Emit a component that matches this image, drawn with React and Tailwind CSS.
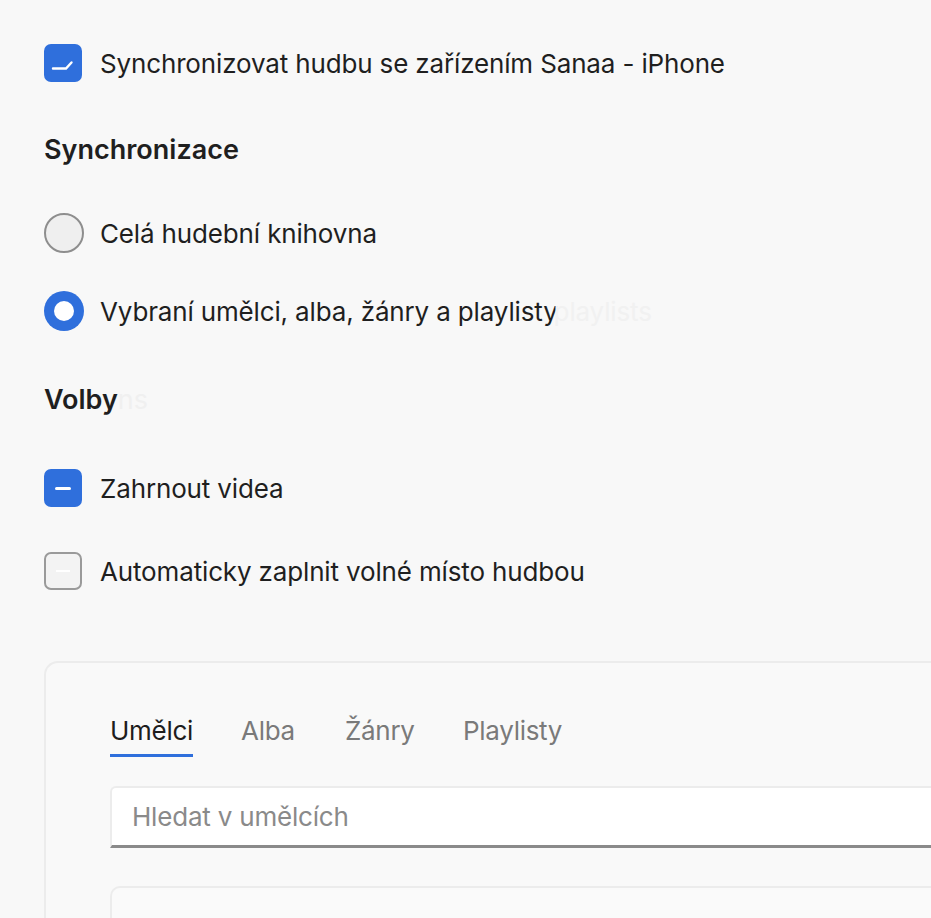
import React, { useState } from "react";

const font = { fontFamily: "Inter, 'Noto Sans', 'Liberation Sans', sans-serif" };

function CheckBox({ checked, mark }) {
  if (!checked) {
    return (
      <div className="w-[38px] h-[38px] shrink-0 rounded-[7px] border-2 border-[#9a9a9a] bg-[#f3f3f3] flex items-center justify-center">
        <div className="w-[14px] h-[2px] bg-white" />
      </div>
    );
  }
  return (
    <div className="w-[38px] h-[38px] shrink-0 rounded-[7px] bg-[#2f6fdc] flex items-center justify-center">
      {mark === "check" ? (
        <svg width="38" height="38" viewBox="0 0 38 38">
          <path d="M9 24.5h13l5.5-6" fill="none" stroke="white" strokeWidth="2.4" strokeLinecap="round" />
        </svg>
      ) : (
        <div className="w-[16px] h-[3px] rounded bg-white" />
      )}
    </div>
  );
}

function Radio({ selected }) {
  if (selected) {
    return (
      <div className="w-[40px] h-[40px] shrink-0 rounded-full bg-[#2f6fdc] flex items-center justify-center">
        <div className="w-[20px] h-[20px] rounded-full bg-white" />
      </div>
    );
  }
  return <div className="w-[40px] h-[40px] shrink-0 rounded-full border-2 border-[#8e8e8e] bg-[#efefef]" />;
}

export default function App() {
  const [tab, setTab] = useState("Umělci");
  const tabs = [
    { label: "Umělci", w: "w-[131px]" },
    { label: "Alba", w: "w-[104px]" },
    { label: "Žánry", w: "w-[118px]" },
    { label: "Playlisty", w: "w-[120px]" },
  ];

  return (
    <div className="min-h-[918px] w-[931px] overflow-hidden bg-[#f8f8f8] text-[#1f1f1f]" style={font}>
      <div className="pl-[44px] pt-[44px]">
        <div className="flex items-center gap-[18px] h-[38px]">
          <CheckBox checked mark="check" />
          <span className="text-[26px] tracking-[-0.15px]">Synchronizovat hudbu se zařízením Sanaa - iPhone</span>
        </div>

        <h2 className="mt-[52px] text-[27px] font-semibold leading-[32px]">Synchronizace</h2>

        <div className="mt-[47px] flex items-center gap-[16px] h-[40px]">
          <Radio />
          <span className="text-[26px] tracking-[-0.15px]">Celá hudební knihovna</span>
        </div>

        <div className="mt-[38px] flex items-center gap-[16px] h-[40px]">
          <Radio selected />
          <span className="text-[26px] tracking-[-0.15px]">
            Vybraní umělci, alba, žánry a playlisty
            <span className="text-[#f1f1f1] ml-[-4px]">playlists</span>
          </span>
        </div>

        <h2 className="mt-[53px] text-[27px] font-semibold leading-[32px]">
          Volby<span className="text-[#f0f0f0] font-normal">ns</span>
        </h2>

        <div className="mt-[53px] flex items-center gap-[18px] h-[38px]">
          <CheckBox checked />
          <span className="text-[26px] tracking-[-0.15px]">Zahrnout videa</span>
        </div>

        <div className="mt-[45px] flex items-center gap-[18px] h-[38px]">
          <CheckBox />
          <span className="text-[26px] tracking-[-0.15px]">Automaticky zaplnit volné místo hudbou</span>
        </div>

        <div className="mt-[71px] w-[1000px] h-[400px] rounded-tl-[14px] border-t-2 border-l-2 border-[#ececec] bg-[#f9f9f9] pl-[64px] pt-[52px]">
          <div className="flex items-end">
            {tabs.map((t) => (
              <div key={t.label} className={t.w}>
                <button
                  onClick={() => setTab(t.label)}
                  className="relative pb-[10px] text-[26px] leading-[32px] tracking-[-0.3px]"
                >
                  <span className={tab === t.label ? "text-[#1d1d1d]" : "text-[#7a7a7a]"}>{t.label}</span>
                  {tab === t.label && (
                    <span className="absolute left-0 right-0 bottom-0 h-[3px] bg-[#2f6fdc]" />
                  )}
                </button>
              </div>
            ))}
          </div>

          <div className="mt-[29px] h-[62px] rounded-tl-[6px] border-t-2 border-l-2 border-[#ececec] border-b-[3px] border-b-[#8a8a8a] bg-white flex items-center pl-[20px]">
            <input
              className="w-full bg-transparent outline-none text-[26px] tracking-[-0.2px] placeholder:text-[#8a8a8a]"
              placeholder="Hledat v umělcích"
            />
          </div>

          <div className="mt-[38px] h-[200px] rounded-tl-[10px] border-t-2 border-l-2 border-[#ececec] bg-[#fafafa]" />
        </div>
      </div>
    </div>
  );
}
